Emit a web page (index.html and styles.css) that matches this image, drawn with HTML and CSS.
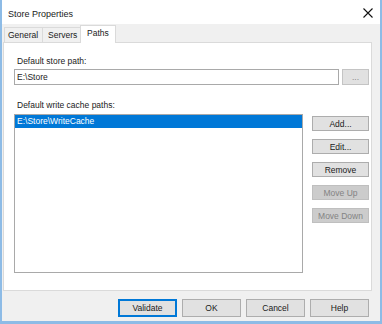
FILE: index.html
```html
<!DOCTYPE html>
<html lang="en">
<head>
    <meta charset="UTF-8">
    <title>Store Properties</title>
    <link rel="stylesheet" href="styles.css">
</head>
<body>
    <div class="window">
        <div class="titlebar">
            <span class="title">Store Properties</span>
            <svg class="close" width="10" height="10" viewBox="0 0 10 10">
                <path d="M0.5 0.5 L9.5 9.5 M9.5 0.5 L0.5 9.5" stroke="#111" stroke-width="1.1" fill="none"/>
            </svg>
        </div>

        <div class="dialog">
            <!-- Tab strip -->
            <div class="tabs">
                <div class="tab">General</div>
                <div class="tab">Servers</div>
                <div class="tab active">Paths</div>
            </div>

            <div class="panel">
                <div class="field-label">Default store path:</div>
                <div class="path-row">
                    <div class="textbox">E:\Store</div>
                    <button class="btn browse">...</button>
                </div>

                <div class="field-label second">Default write cache paths:</div>
                <div class="cache-row">
                    <div class="listbox">
                        <div class="list-item selected">E:\Store\WriteCache</div>
                    </div>
                    <div class="side-buttons">
                        <button class="btn side">Add...</button>
                        <button class="btn side">Edit...</button>
                        <button class="btn side">Remove</button>
                        <button class="btn side" disabled>Move Up</button>
                        <button class="btn side" disabled>Move Down</button>
                    </div>
                </div>
            </div>

            <div class="footer">
                <button class="btn footer-btn default">Validate</button>
                <button class="btn footer-btn">OK</button>
                <button class="btn footer-btn">Cancel</button>
                <button class="btn footer-btn">Help</button>
            </div>
        </div>
    </div>
</body>
</html>
```

FILE: styles.css
```css
* {
    margin: 0;
    padding: 0;
    box-sizing: border-box;
}

body {
    font-family: "Liberation Sans", Arial, sans-serif;
    font-size: 8.5px;
    color: #1a1a1a;
    background: #fff;
}

.window {
    width: 382px;
    height: 324px;
    border-left: 2px solid #8dbbe6;
    border-right: 2px solid #8dbbe6;
    border-bottom: 3px solid #8dbbe6;
    display: flex;
    flex-direction: column;
    background: #fff;
}

.titlebar {
    height: 24px;
    display: flex;
    align-items: center;
    justify-content: space-between;
    padding: 3px 7px 0 6px;
    background: #fff;
}

.title {
    font-size: 9px;
}

.close {
    display: block;
    margin-top: -2px;
}

.dialog {
    flex: 1;
    display: flex;
    flex-direction: column;
    background: #f0f0f0;
}

.tabs {
    height: 18px;
    display: flex;
    align-items: flex-end;
    padding-left: 2px;
}

.tab {
    height: 15px;
    padding: 0 3px 0 3px;
    line-height: 14px;
    border: 1px solid #dadada;
    border-bottom: none;
    border-right: none;
    background: #f0f0f0;
}

.tab:nth-child(1) {
    width: 38px;
}

.tab:nth-child(2) {
    width: 38px;
    padding-left: 5px;
}

.tab.active {
    width: 36px;
    height: 18px;
    padding-left: 6px;
    line-height: 15px;
    background: #fff;
    border-right: 1px solid #dadada;
    margin-bottom: -1px;
    position: relative;
}

.panel {
    height: 249px;
    margin-left: 1px;
    margin-right: 8px;
    background: #fff;
    border: 1px solid #dadada;
    padding: 13px 2px 0 10px;
}

.field-label {
    height: 11px;
    line-height: 11px;
    padding-left: 3px;
}

.field-label.second {
    margin-top: 15px;
}

.path-row {
    display: flex;
    gap: 3px;
    margin-top: 2px;
}

.textbox {
    width: 325px;
    height: 16px;
    border: 1px solid #a9a9a9;
    padding-left: 2px;
    line-height: 14px;
}

.btn {
    font-family: "Liberation Sans", Arial, sans-serif;
    font-size: 8.5px;
    color: #1a1a1a;
    background: #e1e1e1;
    border: 1px solid #adadad;
    text-align: center;
}

.btn:disabled {
    background: #cccccc;
    border-color: #bfbfbf;
    color: #838383;
}

.browse {
    width: 27px;
    height: 16px;
    color: #888;
    border-color: #c4c4c4;
}

.cache-row {
    display: flex;
    gap: 9px;
    margin-top: 3px;
}

.listbox {
    width: 290px;
    height: 159px;
    border: 1px solid #a9a9a9;
}

.list-item {
    height: 13px;
    line-height: 13px;
    padding-left: 2px;
}

.list-item.selected {
    background: #0078d7;
    color: #fff;
}

.side-buttons {
    display: flex;
    flex-direction: column;
    gap: 8px;
    padding-top: 2px;
}

.side {
    width: 57px;
    height: 15px;
}

.footer {
    flex: 1;
    display: flex;
    justify-content: flex-end;
    gap: 5px;
    padding: 8px 11px 0 0;
}

.footer-btn {
    width: 59px;
    height: 18px;
}

.footer-btn.default {
    border: 2px solid #0078d7;
}
```
